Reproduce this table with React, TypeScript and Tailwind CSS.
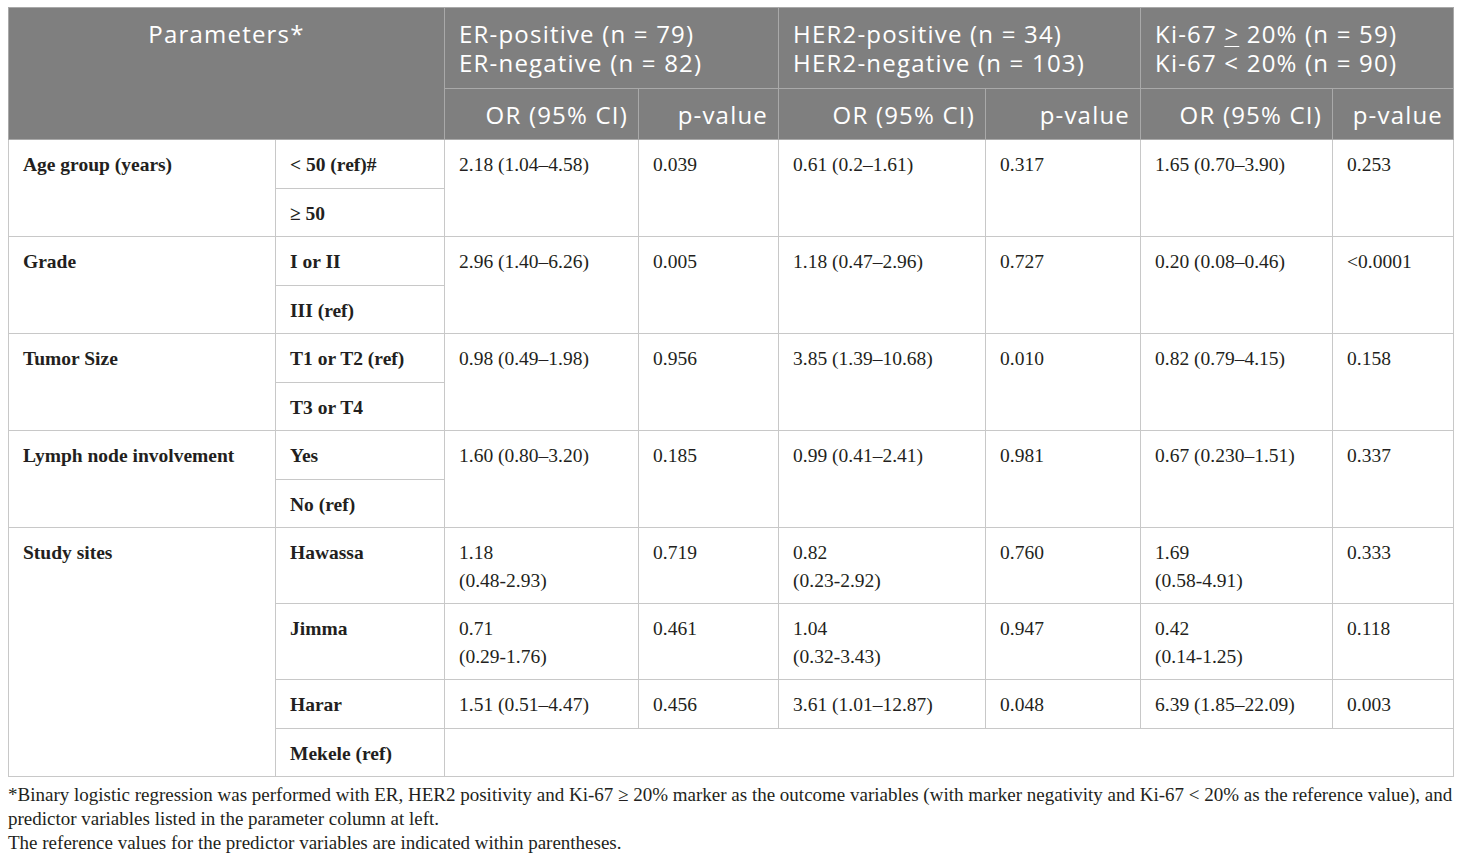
const serif = "font-['Liberation_Serif','Times_New_Roman',serif]";
const sans = "font-['Open_Sans','Liberation_Sans',sans-serif]";

type Row = { sub: string; values?: string[][] };
type Group = { label: string; rows: Row[] };

// values per row: ER OR, ER p, HER2 OR, HER2 p, Ki-67 OR, Ki-67 p
const groups: Group[] = [
  {
    label: "Age group (years)",
    rows: [
      { sub: "< 50 (ref)#", values: [["2.18 (1.04–4.58)"], ["0.039"], ["0.61 (0.2–1.61)"], ["0.317"], ["1.65 (0.70–3.90)"], ["0.253"]] },
      { sub: "≥ 50" },
    ],
  },
  {
    label: "Grade",
    rows: [
      { sub: "I or II", values: [["2.96 (1.40–6.26)"], ["0.005"], ["1.18 (0.47–2.96)"], ["0.727"], ["0.20 (0.08–0.46)"], ["<0.0001"]] },
      { sub: "III (ref)" },
    ],
  },
  {
    label: "Tumor Size",
    rows: [
      { sub: "T1 or T2 (ref)", values: [["0.98 (0.49–1.98)"], ["0.956"], ["3.85 (1.39–10.68)"], ["0.010"], ["0.82 (0.79–4.15)"], ["0.158"]] },
      { sub: "T3 or T4" },
    ],
  },
  {
    label: "Lymph node involvement",
    rows: [
      { sub: "Yes", values: [["1.60 (0.80–3.20)"], ["0.185"], ["0.99 (0.41–2.41)"], ["0.981"], ["0.67 (0.230–1.51)"], ["0.337"]] },
      { sub: "No (ref)" },
    ],
  },
];

const sites: Row[] = [
  { sub: "Hawassa", values: [["1.18", "(0.48-2.93)"], ["0.719"], ["0.82", "(0.23-2.92)"], ["0.760"], ["1.69", "(0.58-4.91)"], ["0.333"]] },
  { sub: "Jimma", values: [["0.71", "(0.29-1.76)"], ["0.461"], ["1.04", "(0.32-3.43)"], ["0.947"], ["0.42", "(0.14-1.25)"], ["0.118"]] },
  { sub: "Harar", values: [["1.51 (0.51–4.47)"], ["0.456"], ["3.61 (1.01–12.87)"], ["0.048"], ["6.39 (1.85–22.09)"], ["0.003"]] },
];

const td = "border border-[#c8c8c8] align-top px-[14px] pt-[11px] pb-[9px] leading-[27.5px]";
const th = "border border-[#a9a9a9] font-normal";
const headTop = `${th} text-left align-top px-[14px] pt-[11px] pb-[5px]`;

function Lines({ lines }: { lines: string[] }) {
  return (
    <>
      {lines.map((l, i) => (
        <div key={i}>{l}</div>
      ))}
    </>
  );
}

export default function App() {
  return (
    <div className="bg-white w-[1460px] h-[862px] pt-[7px] pl-[8px]">
      <table className={`table-fixed border-collapse w-[1445px] ${serif} text-[19.5px] text-[#231f20]`}>
        <colgroup>
          <col className="w-[267px]" />
          <col className="w-[169px]" />
          <col className="w-[194px]" />
          <col className="w-[140px]" />
          <col className="w-[207px]" />
          <col className="w-[155px]" />
          <col className="w-[192px]" />
          <col className="w-[121px]" />
        </colgroup>
        <thead className={`${sans} bg-[#7f7f7f] text-white text-[24px] leading-[29px] tracking-[1.2px]`}>
          <tr className="h-[81px]">
            <th colSpan={2} rowSpan={2} className={`${th} align-top text-center pt-[11px]`}>
              Parameters*
            </th>
            <th colSpan={2} className={headTop}>
              <div>ER-positive (n = 79)</div>
              <div>ER-negative (n = 82)</div>
            </th>
            <th colSpan={2} className={headTop}>
              <div>HER2-positive (n = 34)</div>
              <div>HER2-negative (n = 103)</div>
            </th>
            <th colSpan={2} className={headTop}>
              <div>
                Ki-67 <span className="underline underline-offset-[3px] decoration-1">&gt;</span> 20% (n = 59)
              </div>
              <div>Ki-67 &lt; 20% (n = 90)</div>
            </th>
          </tr>
          <tr className="h-[51px]">
            {["OR (95% CI)", "p-value", "OR (95% CI)", "p-value", "OR (95% CI)", "p-value"].map((h, i) => (
              <th key={i} className={`${th} text-right align-middle px-[10px]`}>
                {h}
              </th>
            ))}
          </tr>
        </thead>
        <tbody>
          {groups.map((g) =>
            g.rows.map((r, ri) => (
              <tr key={g.label + ri}>
                {ri === 0 && (
                  <td rowSpan={2} className={`${td} font-bold`}>
                    {g.label}
                  </td>
                )}
                <td className={`${td} font-bold`}>{r.sub}</td>
                {r.values &&
                  r.values.map((v, vi) => (
                    <td key={vi} rowSpan={2} className={td}>
                      <Lines lines={v} />
                    </td>
                  ))}
              </tr>
            ))
          )}
          {sites.map((s, si) => (
            <tr key={s.sub}>
              {si === 0 && (
                <td rowSpan={4} className={`${td} font-bold`}>
                  Study sites
                </td>
              )}
              <td className={`${td} font-bold`}>{s.sub}</td>
              {s.values!.map((v, vi) => (
                <td key={vi} className={td}>
                  <Lines lines={v} />
                </td>
              ))}
            </tr>
          ))}
          <tr>
            <td className={`${td} font-bold`}>Mekele (ref)</td>
            <td colSpan={6} className={td}></td>
          </tr>
        </tbody>
      </table>
      <div className={`${serif} text-[19px] leading-[24px] text-[#231f20] w-[1445px] mt-[6px]`}>
        <p>
          *Binary logistic regression was performed with ER, HER2 positivity and Ki-67 ≥ 20% marker as the outcome
          variables (with marker negativity and Ki-67 &lt; 20% as the reference value), and predictor variables listed
          in the parameter column at left.
        </p>
        <p>The reference values for the predictor variables are indicated within parentheses.</p>
      </div>
    </div>
  );
}
